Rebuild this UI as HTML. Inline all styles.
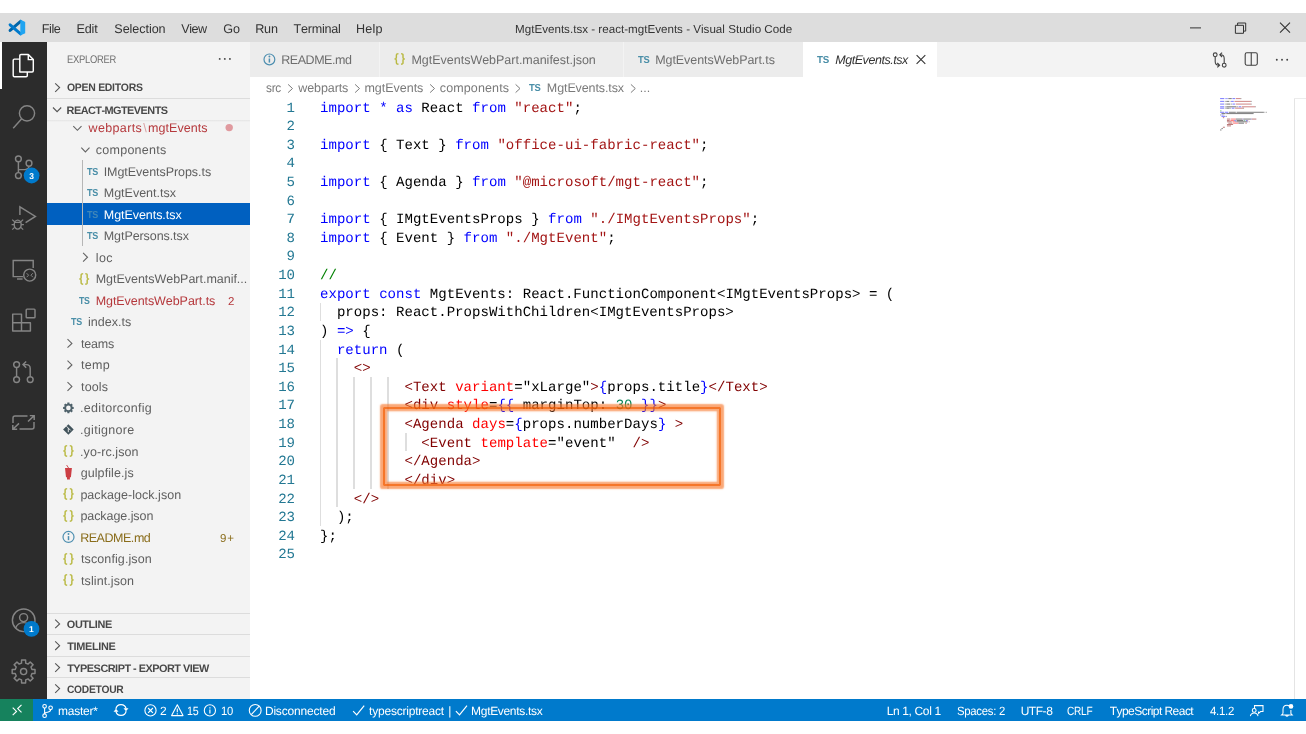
<!DOCTYPE html>
<html><head><meta charset="utf-8"><title>MgtEvents.tsx - react-mgtEvents - Visual Studio Code</title>
<style>
html,body{margin:0;padding:0;background:#fff;}
body{text-rendering:geometricPrecision;width:1306px;height:734px;position:relative;overflow:hidden;font-family:"Liberation Sans", sans-serif;}
.a{position:absolute;}
.t{position:absolute;white-space:pre;font-kerning:none;line-height:20px;height:20px;}
.c{position:absolute;white-space:pre;font-family:"Liberation Mono", monospace;font-size:14.05px;line-height:20px;height:20px;letter-spacing:0.016px;}
.ln{position:absolute;white-space:pre;font-family:"Liberation Mono", monospace;font-size:14.05px;line-height:20px;height:20px;color:#237893;text-align:right;width:40px;left:254.7px;letter-spacing:-0.25px;}
.g{position:absolute;width:1.5px;background:#dedede;}
svg{position:absolute;overflow:visible;}
</style></head><body>
<div class="a" style="left:-8px;top:0;width:1322px;height:734px;filter:blur(0.3px)"><div class="a" style="left:8px;top:0;width:1306px;height:734px">

<div class="a" style="left:-8px;top:13px;width:1322px;height:29px;background:#dddddd"></div>
<div class="a" style="left:-8px;top:42px;width:55px;height:657px;background:#2c2c2c"></div>
<div class="a" style="left:-8px;top:42px;width:10px;height:47.3px;background:#fff"></div>
<div class="a" style="left:47px;top:42px;width:203px;height:657px;background:#f3f3f3"></div>
<div class="a" style="left:250px;top:42px;width:1064px;height:34.8px;background:#f3f3f3"></div>
<div class="a" style="left:250px;top:42px;width:129px;height:34.8px;background:#ececec"></div>
<div class="a" style="left:380px;top:42px;width:243px;height:34.8px;background:#ececec"></div>
<div class="a" style="left:624px;top:42px;width:179px;height:34.8px;background:#ececec"></div>
<div class="a" style="left:803px;top:42px;width:134px;height:34.8px;background:#fff"></div>
<div class="a" style="left:-8px;top:698.8px;width:1322px;height:22px;background:#007acc"></div>
<div class="a" style="left:-8px;top:698.8px;width:41.4px;height:22px;background:#16825d"></div>
<div class="a" style="left:47px;top:98.0px;width:203px;height:1px;background:#dcdcdc"></div>
<div class="a" style="left:47px;top:612.5px;width:203px;height:1px;background:#dcdcdc"></div>
<div class="a" style="left:47px;top:634.3px;width:203px;height:1px;background:#dcdcdc"></div>
<div class="a" style="left:47px;top:655.8px;width:203px;height:1px;background:#dcdcdc"></div>
<div class="a" style="left:47px;top:676.9px;width:203px;height:1px;background:#dcdcdc"></div>
<div class="a" style="left:47px;top:119.5px;width:203px;height:2px;background:linear-gradient(#e4e4e4,#f3f3f3)"></div>
<div class="a" style="left:47px;top:203.3px;width:203px;height:21.5px;background:#0060c0"></div>
<div class="a" style="left:82.2px;top:160.3px;width:1.2px;height:85.7px;background:#b6b6b6"></div>
<div class="a" style="left:1293.7px;top:98px;width:1.3px;height:601px;background:#e4e4e4"></div>
<div class="a" style="left:1294px;top:97.5px;width:20px;height:1px;background:#ececec"></div>
<div class="g" style="left:319.5px;top:302.5px;height:18.6px"></div>
<div class="g" style="left:319.5px;top:339.8px;height:186.2px"></div>
<div class="g" style="left:336.4px;top:358.4px;height:149.0px"></div>
<div class="g" style="left:353.3px;top:377.0px;height:111.7px"></div>
<div class="g" style="left:370.2px;top:377.0px;height:111.7px"></div>
<div class="g" style="left:387.1px;top:377.0px;height:111.7px"></div>
<div class="g" style="left:405.0px;top:432.9px;height:18.6px"></div>
<span class="c" style="left:320.00px;top:99.00px;color:#0000ff">import</span>
<span class="c" style="left:379.13px;top:99.00px;color:#0000ff">*</span>
<span class="c" style="left:396.02px;top:99.00px;color:#0000ff">as</span>
<span class="c" style="left:421.36px;top:99.00px;color:#000">React</span>
<span class="c" style="left:472.05px;top:99.00px;color:#0000ff">from</span>
<span class="c" style="left:514.28px;top:99.00px;color:#a31515">&quot;react&quot;</span>
<span class="c" style="left:573.41px;top:99.00px;color:#000">;</span>
<span class="c" style="left:320.00px;top:136.00px;color:#0000ff">import</span>
<span class="c" style="left:379.13px;top:136.00px;color:#000">{ Text }</span>
<span class="c" style="left:455.15px;top:136.00px;color:#0000ff">from</span>
<span class="c" style="left:497.39px;top:136.00px;color:#a31515">&quot;office-ui-fabric-react&quot;</span>
<span class="c" style="left:700.12px;top:136.00px;color:#000">;</span>
<span class="c" style="left:320.00px;top:173.00px;color:#0000ff">import</span>
<span class="c" style="left:379.13px;top:173.00px;color:#000">{ Agenda }</span>
<span class="c" style="left:472.05px;top:173.00px;color:#0000ff">from</span>
<span class="c" style="left:514.28px;top:173.00px;color:#a31515">&quot;@microsoft/mgt-react&quot;</span>
<span class="c" style="left:700.12px;top:173.00px;color:#000">;</span>
<span class="c" style="left:320.00px;top:210.00px;color:#0000ff">import</span>
<span class="c" style="left:379.13px;top:210.00px;color:#000">{ IMgtEventsProps }</span>
<span class="c" style="left:548.07px;top:210.00px;color:#0000ff">from</span>
<span class="c" style="left:590.30px;top:210.00px;color:#a31515">&quot;./IMgtEventsProps&quot;</span>
<span class="c" style="left:750.80px;top:210.00px;color:#000">;</span>
<span class="c" style="left:320.00px;top:229.00px;color:#0000ff">import</span>
<span class="c" style="left:379.13px;top:229.00px;color:#000">{ Event }</span>
<span class="c" style="left:463.60px;top:229.00px;color:#0000ff">from</span>
<span class="c" style="left:505.83px;top:229.00px;color:#a31515">&quot;./MgtEvent&quot;</span>
<span class="c" style="left:607.20px;top:229.00px;color:#000">;</span>
<span class="c" style="left:320.00px;top:266.00px;color:#008000">//</span>
<span class="c" style="left:320.00px;top:285.00px;color:#0000ff">export</span>
<span class="c" style="left:379.13px;top:285.00px;color:#0000ff">const</span>
<span class="c" style="left:429.81px;top:285.00px;color:#000">MgtEvents: React.FunctionComponent&lt;IMgtEventsProps&gt; = (</span>
<span class="c" style="left:336.89px;top:303.00px;color:#000">props: React.PropsWithChildren&lt;IMgtEventsProps&gt;</span>
<span class="c" style="left:320.00px;top:322.00px;color:#000">)</span>
<span class="c" style="left:336.89px;top:322.00px;color:#0000ff">=&gt;</span>
<span class="c" style="left:362.24px;top:322.00px;color:#000">{</span>
<span class="c" style="left:336.89px;top:341.00px;color:#0000ff">return</span>
<span class="c" style="left:396.02px;top:341.00px;color:#000">(</span>
<span class="c" style="left:353.79px;top:359.00px;color:#800000">&lt;&gt;</span>
<span class="c" style="left:404.47px;top:378.00px;color:#800000">&lt;Text</span>
<span class="c" style="left:455.15px;top:378.00px;color:#ff0000">variant</span>
<span class="c" style="left:514.28px;top:378.00px;color:#000">=&quot;xLarge&quot;</span>
<span class="c" style="left:590.30px;top:378.00px;color:#800000">&gt;</span>
<span class="c" style="left:598.75px;top:378.00px;color:#0000ff">{</span>
<span class="c" style="left:607.20px;top:378.00px;color:#000">props.title</span>
<span class="c" style="left:700.12px;top:378.00px;color:#0000ff">}</span>
<span class="c" style="left:708.56px;top:378.00px;color:#800000">&lt;/Text&gt;</span>
<span class="c" style="left:404.47px;top:396.00px;color:#800000">&lt;div</span>
<span class="c" style="left:446.70px;top:396.00px;color:#ff0000">style</span>
<span class="c" style="left:488.94px;top:396.00px;color:#000">=</span>
<span class="c" style="left:497.39px;top:396.00px;color:#0000ff">{{</span>
<span class="c" style="left:522.73px;top:396.00px;color:#000">marginTop:</span>
<span class="c" style="left:615.64px;top:396.00px;color:#098658">30</span>
<span class="c" style="left:640.99px;top:396.00px;color:#0000ff">}}</span>
<span class="c" style="left:657.88px;top:396.00px;color:#800000">&gt;</span>
<span class="c" style="left:404.47px;top:415.00px;color:#800000">&lt;Agenda</span>
<span class="c" style="left:472.05px;top:415.00px;color:#ff0000">days</span>
<span class="c" style="left:505.83px;top:415.00px;color:#000">=</span>
<span class="c" style="left:514.28px;top:415.00px;color:#0000ff">{</span>
<span class="c" style="left:522.73px;top:415.00px;color:#000">props.numberDays</span>
<span class="c" style="left:657.88px;top:415.00px;color:#0000ff">}</span>
<span class="c" style="left:674.77px;top:415.00px;color:#800000">&gt;</span>
<span class="c" style="left:421.36px;top:434.00px;color:#800000">&lt;Event</span>
<span class="c" style="left:480.49px;top:434.00px;color:#ff0000">template</span>
<span class="c" style="left:548.07px;top:434.00px;color:#000">=&quot;event&quot;</span>
<span class="c" style="left:632.54px;top:434.00px;color:#800000">/&gt;</span>
<span class="c" style="left:404.47px;top:452.00px;color:#800000">&lt;/Agenda&gt;</span>
<span class="c" style="left:404.47px;top:471.00px;color:#800000">&lt;/div&gt;</span>
<span class="c" style="left:353.79px;top:490.00px;color:#800000">&lt;/&gt;</span>
<span class="c" style="left:336.89px;top:508.00px;color:#000">);</span>
<span class="c" style="left:320.00px;top:527.00px;color:#000">};</span>
<span class="ln" style="top:99.00px">1</span>
<span class="ln" style="top:117.00px">2</span>
<span class="ln" style="top:136.00px">3</span>
<span class="ln" style="top:154.00px">4</span>
<span class="ln" style="top:173.00px">5</span>
<span class="ln" style="top:192.00px">6</span>
<span class="ln" style="top:210.00px">7</span>
<span class="ln" style="top:229.00px">8</span>
<span class="ln" style="top:247.00px">9</span>
<span class="ln" style="top:266.00px">10</span>
<span class="ln" style="top:285.00px">11</span>
<span class="ln" style="top:303.00px">12</span>
<span class="ln" style="top:322.00px">13</span>
<span class="ln" style="top:341.00px">14</span>
<span class="ln" style="top:359.00px">15</span>
<span class="ln" style="top:378.00px">16</span>
<span class="ln" style="top:396.00px">17</span>
<span class="ln" style="top:415.00px">18</span>
<span class="ln" style="top:434.00px">19</span>
<span class="ln" style="top:452.00px">20</span>
<span class="ln" style="top:471.00px">21</span>
<span class="ln" style="top:490.00px">22</span>
<span class="ln" style="top:508.00px">23</span>
<span class="ln" style="top:527.00px">24</span>
<span class="ln" style="top:545.00px">25</span>
<div class="a" style="left:383.2px;top:406.7px;width:334.1px;height:75.5px;border:2px solid rgba(243,94,5,.85);box-shadow:0 0 1.5px 2.2px rgba(247,120,45,.65),inset 0 0 1.5px 2.2px rgba(247,120,45,.65);border-radius:1px"></div>
<svg class="a" style="left:0;top:0" width="1306" height="734" viewBox="0 0 1306 734" fill="none" ><path d="M55.20 83.30L59.60 87.60L55.20 91.90" stroke="#555" stroke-width="1.1"/><path d="M53.00 107.50L57.10 111.70L61.20 107.50" stroke="#555" stroke-width="1.1"/><path d="M55.20 619.60L59.60 623.90L55.20 628.20" stroke="#555" stroke-width="1.1"/><path d="M55.20 641.40L59.60 645.70L55.20 650.00" stroke="#555" stroke-width="1.1"/><path d="M55.20 663.30L59.60 667.60L55.20 671.90" stroke="#555" stroke-width="1.1"/><path d="M55.20 684.30L59.60 688.60L55.20 692.90" stroke="#555" stroke-width="1.1"/><path d="M73.30 126.10L77.40 130.30L81.50 126.10" stroke="#646464" stroke-width="1.1"/><path d="M81.30 147.64L85.40 151.84L89.50 147.64" stroke="#646464" stroke-width="1.1"/><path d="M83.10 252.94L87.50 257.24L83.10 261.54" stroke="#646464" stroke-width="1.1"/><path d="M67.50 339.10L71.90 343.40L67.50 347.70" stroke="#646464" stroke-width="1.1"/><path d="M67.50 360.64L71.90 364.94L67.50 369.24" stroke="#646464" stroke-width="1.1"/><path d="M67.50 382.18L71.90 386.48L67.50 390.78" stroke="#646464" stroke-width="1.1"/><path d="M288.10 84.40L292.50 88.50L288.10 92.60" stroke="#7a7a7a" stroke-width="1.0"/><path d="M355.10 84.40L359.50 88.50L355.10 92.60" stroke="#7a7a7a" stroke-width="1.0"/><path d="M430.10 84.40L434.50 88.50L430.10 92.60" stroke="#7a7a7a" stroke-width="1.0"/><path d="M515.60 84.40L520.00 88.50L515.60 92.60" stroke="#7a7a7a" stroke-width="1.0"/><path d="M630.90 84.40L635.30 88.50L630.90 92.60" stroke="#7a7a7a" stroke-width="1.0"/><path d="M20.6 21.4L10.1 30.4" stroke="#0065a9" stroke-width="3" stroke-linecap="round"/><path d="M20.6 33.8L10.1 24.8" stroke="#007acc" stroke-width="3" stroke-linecap="round"/><path d="M20.3 19.6L25.2 21.9V33.3L20.3 35.6Z" fill="#1fa4f1"/><path d="M1190 27.9H1201" stroke="#333" stroke-width="1"/><path d="M1235.4 25.3H1243.5V33.3H1235.4Z" stroke="#333" stroke-width="1"/><path d="M1237.6 25.3V23H1245.7V31.1H1243.5" stroke="#333" stroke-width="1"/><path d="M1280 22.7L1290 32.7M1290 22.7L1280 32.7" stroke="#333" stroke-width="1.1"/><circle cx="269.4" cy="59.4" r="5.4" stroke="#4e8fb0" stroke-width="1.2"/><path d="M269.40 58.50V62.60" stroke="#4e8fb0" stroke-width="1.5"/><circle cx="269.4" cy="56.50" r="0.95" fill="#4e8fb0"/><circle cx="68.5" cy="536.96" r="5.5" stroke="#4e8fb0" stroke-width="1.2"/><path d="M68.50 536.06V540.16" stroke="#4e8fb0" stroke-width="1.5"/><circle cx="68.5" cy="534.06" r="0.95" fill="#4e8fb0"/><path d="M916.6 55.2L925.3 63.9M925.3 55.2L916.6 63.9" stroke="#333" stroke-width="1.1"/><circle cx="1215.2" cy="54.8" r="1.9" stroke="#424242" stroke-width="1.1"/><circle cx="1224.2" cy="65.2" r="1.9" stroke="#424242" stroke-width="1.1"/><path d="M1215.2 56.8V61.5Q1215.2 65.2 1218.8 65.2M1217.3 63L1219.6 65.2L1217.3 67.4" stroke="#424242" stroke-width="1.1"/><path d="M1224.2 63.2V58.5Q1224.2 54.8 1220.6 54.8M1222.1 52.6L1219.8 54.8L1222.1 57" stroke="#424242" stroke-width="1.1"/><rect x="1245.2" y="52.8" width="12.1" height="12.4" rx="1.6" stroke="#424242" stroke-width="1.1"/><path d="M1251.25 52.8V65.2" stroke="#424242" stroke-width="1.1"/><circle cx="1276.8" cy="59.7" r="0.95" fill="#424242"/><circle cx="1282" cy="59.7" r="0.95" fill="#424242"/><circle cx="1287.2" cy="59.7" r="0.95" fill="#424242"/><circle cx="219.7" cy="58.9" r="0.95" fill="#424242"/><circle cx="224.8" cy="58.9" r="0.95" fill="#424242"/><circle cx="229.9" cy="58.9" r="0.95" fill="#424242"/><circle cx="229.2" cy="127.6" r="3.7" fill="#e09a9f"/><path d="M67.28 403.87L67.36 402.62L69.44 402.62L69.52 403.87L70.47 404.27L71.41 403.44L72.88 404.91L72.05 405.85L72.45 406.80L73.70 406.88L73.70 408.96L72.45 409.04L72.05 409.99L72.88 410.93L71.41 412.40L70.47 411.57L69.52 411.97L69.44 413.22L67.36 413.22L67.28 411.97L66.33 411.57L65.39 412.40L63.92 410.93L64.75 409.99L64.35 409.04L63.10 408.96L63.10 406.88L64.35 406.80L64.75 405.85L63.92 404.91L65.39 403.44L66.33 404.27ZM66.10 407.92a2.30 2.30 0 1 0 4.60 0a2.30 2.30 0 1 0 -4.60 0Z" fill="#4f626b" fill-rule="evenodd"/><path d="M68.4 424.26L73.7 429.56L68.4 434.86L63.1 429.56Z" fill="#41535b"/><path d="M66.4 426.16L70.6 430.36M68.3 428.16V432.16" stroke="#f3f3f3" stroke-width="0.9"/><path d="M65 468.04H71.9L70.9 477.24H69.9V479.44H67V477.24H66Z" fill="#cc3e44"/><path d="M68.6 468.04L66.6 465.04" stroke="#cc3e44" stroke-width="0.9"/><path d="M19.8 71.9V55.6Q19.8 54.4 21 54.4H28.3L33.3 59.6V70.7Q33.3 71.9 32.1 71.9Z" stroke="#fff" stroke-width="1.45" stroke-linejoin="round"/><path d="M28.3 54.4V59.6H33.3" stroke="#fff" stroke-width="1.45"/><path d="M19.8 59.1H14.4Q13.2 59.1 13.2 60.3V75.6Q13.2 76.8 14.4 76.8H26.1Q27.3 76.8 27.3 75.6V71.9" stroke="#fff" stroke-width="1.45"/><circle cx="27" cy="113.3" r="7.6" stroke="#858585" stroke-width="1.45"/><path d="M21.7 118.8L13.2 128.2" stroke="#858585" stroke-width="1.45"/><circle cx="18.4" cy="158.8" r="2.9" stroke="#858585" stroke-width="1.45"/><circle cx="29" cy="163.2" r="2.9" stroke="#858585" stroke-width="1.45"/><circle cx="18.4" cy="175.5" r="2.9" stroke="#858585" stroke-width="1.45"/><path d="M18.4 161.7V172.6M29 166.1Q29 169.6 25 169.6H18.4" stroke="#858585" stroke-width="1.45"/><circle cx="31.6" cy="175.5" r="7.9" fill="#007acc"/><path d="M19.9 215V206.8L35.4 216.4L25.6 222.6" stroke="#858585" stroke-width="1.45" stroke-linejoin="miter"/><ellipse cx="17.7" cy="224.6" rx="3.5" ry="4.5" stroke="#858585" stroke-width="1.45"/><path d="M14.2 224.6H11.6M21.2 224.6H23.9M14.6 221.8L12.2 219.6M20.8 221.8L23.2 219.6M14.6 227.4L12.2 229.6M20.8 227.4L23.2 229.6M14.6 222.4H20.8" stroke="#858585" stroke-width="1.2"/><path d="M23 276.6H13.2V260.4H33.2V268" stroke="#858585" stroke-width="1.45"/><path d="M17 279H22.6" stroke="#858585" stroke-width="1.45"/><circle cx="29.7" cy="275.1" r="6" stroke="#858585" stroke-width="1.45"/><path d="M26.6 273.2L28.6 275.2L26.6 277.2M32.9 273.2L30.9 275.2L32.9 277.2" stroke="#858585" stroke-width="1"/><path d="M12.7 314.1H21.5V322.7H30.4V330.9H12.7ZM12.7 322.7H21.5V330.9" stroke="#858585" stroke-width="1.45" stroke-linejoin="round"/><rect x="26.2" y="309.1" width="8.8" height="8.6" rx="0.8" stroke="#858585" stroke-width="1.45"/><circle cx="16.6" cy="364.6" r="2.9" stroke="#858585" stroke-width="1.45"/><circle cx="16.6" cy="379.6" r="2.9" stroke="#858585" stroke-width="1.45"/><circle cx="30.2" cy="379.6" r="2.9" stroke="#858585" stroke-width="1.45"/><path d="M16.6 367.5V376.7M30.2 376.7V368.5Q30.2 364.6 26.3 364.6H23.4M26.2 361.4L23 364.6L26.2 367.8" stroke="#858585" stroke-width="1.45"/><path d="M27.5 415.9H15Q13 415.9 13 417.9V423M19.5 429H32Q34 429 34 427V421.9" stroke="#858585" stroke-width="1.45"/><path d="M28 421.5L34.2 415.6M29.8 415.6H34.2V420M19 423.4L12.8 429.3M17.2 429.3H12.8V424.9" stroke="#858585" stroke-width="1.45"/><circle cx="23.7" cy="620.3" r="11.3" stroke="#858585" stroke-width="1.45"/><circle cx="23.6" cy="617.6" r="4" stroke="#858585" stroke-width="1.45"/><path d="M15.6 628.2Q17.5 622.6 23.6 622.6Q29.7 622.6 31.6 628.2" stroke="#858585" stroke-width="1.45"/><circle cx="31.5" cy="628.9" r="7.9" fill="#007acc"/><path d="M21.51 663.16L21.56 660.08L25.64 660.08L25.69 663.16L28.02 664.12L30.23 661.98L33.12 664.87L30.98 667.08L31.94 669.41L35.02 669.46L35.02 673.54L31.94 673.59L30.98 675.92L33.12 678.13L30.23 681.02L28.02 678.88L25.69 679.84L25.64 682.92L21.56 682.92L21.51 679.84L19.18 678.88L16.97 681.02L14.08 678.13L16.22 675.92L15.26 673.59L12.18 673.54L12.18 669.46L15.26 669.41L16.22 667.08L14.08 664.87L16.97 661.98L19.18 664.12Z" stroke="#858585" stroke-width="1.45" stroke-linejoin="round"/><circle cx="23.6" cy="671.5" r="3.1" stroke="#858585" stroke-width="1.45"/><path d="M12.7 707.6L16.5 711.4L12.7 715.2M21.5 704.8L17.7 708.6L21.5 712.4" stroke="#fff" stroke-width="1.15"/><circle cx="44.6" cy="706.3" r="1.8" stroke="#fff" stroke-width="1.1"/><circle cx="44.6" cy="715.7" r="1.8" stroke="#fff" stroke-width="1.1"/><circle cx="50.6" cy="707.8" r="1.8" stroke="#fff" stroke-width="1.1"/><path d="M44.6 708.1V713.9M50.6 709.6Q50.6 712 47.5 712.2Q44.6 712.4 44.6 713.9" stroke="#fff" stroke-width="1.1"/><path d="M115.9 708.9A5.2 5.2 0 0 1 126.1 708.6M126.1 711.1A5.2 5.2 0 0 1 115.9 711.4" stroke="#fff" stroke-width="1.2"/><path d="M123.5 708.2H128.5L126 711.3ZM113.5 711.8H118.5L116 708.7Z" fill="#fff"/><circle cx="150.5" cy="710.4" r="5.6" stroke="#fff" stroke-width="1.1"/><path d="M148.1 708L152.9 712.8M152.9 708L148.1 712.8" stroke="#fff" stroke-width="1.1"/><path d="M177.3 704.8L183 715.6H171.6Z" stroke="#fff" stroke-width="1.1" stroke-linejoin="round"/><path d="M177.3 708.6V712.2M177.3 713.2V714.4" stroke="#fff" stroke-width="1.1"/><circle cx="209.9" cy="710.4" r="5.6" stroke="#fff" stroke-width="1.1"/><path d="M209.9 709.6V713.4M209.9 707.2V708.5" stroke="#fff" stroke-width="1.2"/><circle cx="255.2" cy="710.4" r="5.9" stroke="#fff" stroke-width="1.1"/><path d="M251.2 714.6L259.2 706.2" stroke="#fff" stroke-width="1.1"/><path d="M353.1 711.2L356.7 714.8L364.2 705.6" stroke="#fff" stroke-width="1.2"/><path d="M455.9 711.2L459.5 714.8L467.0 705.6" stroke="#fff" stroke-width="1.2"/><path d="M1254.5 711.5V705.6H1263V711.5H1260.6L1258.6 713.4V711.5" stroke="#fff" stroke-width="1.05"/><circle cx="1254.2" cy="710.4" r="1.9" stroke="#fff" stroke-width="1.05" fill="#007acc"/><path d="M1250.4 716.2Q1250.9 712.9 1254.2 712.9Q1257.5 712.9 1258 716.2" stroke="#fff" stroke-width="1.05" fill="#007acc"/><path d="M1283 713.6V709.4Q1283 705.2 1287 705.2Q1288.2 705.2 1289 705.7M1290.9 710V713.6L1292.2 714.9H1281.6L1283 713.6M1285.6 715.4Q1287 717 1288.4 715.4" stroke="#fff" stroke-width="1.05"/><circle cx="1291" cy="706.4" r="2.3" fill="#fff"/></svg>
<svg class="a" style="left:0;top:0;opacity:.55" width="1306" height="734" viewBox="0 0 1306 734"><rect x="1220.10" y="98.15" width="4.10" height="0.95" fill="#0000ff"/><rect x="1224.89" y="98.15" width="0.68" height="0.95" fill="#0000ff"/><rect x="1226.26" y="98.15" width="1.37" height="0.95" fill="#0000ff"/><rect x="1228.31" y="98.15" width="3.42" height="0.95" fill="#000"/><rect x="1232.41" y="98.15" width="2.74" height="0.95" fill="#0000ff"/><rect x="1235.83" y="98.15" width="4.79" height="0.95" fill="#a31515"/><rect x="1240.62" y="98.15" width="0.68" height="0.95" fill="#000"/><rect x="1220.10" y="100.88" width="4.10" height="0.95" fill="#0000ff"/><rect x="1224.89" y="100.88" width="0.68" height="0.95" fill="#000"/><rect x="1226.26" y="100.88" width="2.74" height="0.95" fill="#000"/><rect x="1229.68" y="100.88" width="0.68" height="0.95" fill="#000"/><rect x="1231.04" y="100.88" width="2.74" height="0.95" fill="#0000ff"/><rect x="1234.46" y="100.88" width="16.42" height="0.95" fill="#a31515"/><rect x="1250.88" y="100.88" width="0.68" height="0.95" fill="#000"/><rect x="1220.10" y="103.60" width="4.10" height="0.95" fill="#0000ff"/><rect x="1224.89" y="103.60" width="0.68" height="0.95" fill="#000"/><rect x="1226.26" y="103.60" width="4.10" height="0.95" fill="#000"/><rect x="1231.04" y="103.60" width="0.68" height="0.95" fill="#000"/><rect x="1232.41" y="103.60" width="2.74" height="0.95" fill="#0000ff"/><rect x="1235.83" y="103.60" width="15.05" height="0.95" fill="#a31515"/><rect x="1250.88" y="103.60" width="0.68" height="0.95" fill="#000"/><rect x="1220.10" y="106.33" width="4.10" height="0.95" fill="#0000ff"/><rect x="1224.89" y="106.33" width="0.68" height="0.95" fill="#000"/><rect x="1226.26" y="106.33" width="10.26" height="0.95" fill="#000"/><rect x="1237.20" y="106.33" width="0.68" height="0.95" fill="#000"/><rect x="1238.57" y="106.33" width="2.74" height="0.95" fill="#0000ff"/><rect x="1241.99" y="106.33" width="13.00" height="0.95" fill="#a31515"/><rect x="1254.98" y="106.33" width="0.68" height="0.95" fill="#000"/><rect x="1220.10" y="107.69" width="4.10" height="0.95" fill="#0000ff"/><rect x="1224.89" y="107.69" width="0.68" height="0.95" fill="#000"/><rect x="1226.26" y="107.69" width="3.42" height="0.95" fill="#000"/><rect x="1230.36" y="107.69" width="0.68" height="0.95" fill="#000"/><rect x="1231.73" y="107.69" width="2.74" height="0.95" fill="#0000ff"/><rect x="1235.15" y="107.69" width="8.21" height="0.95" fill="#a31515"/><rect x="1243.36" y="107.69" width="0.68" height="0.95" fill="#000"/><rect x="1220.10" y="110.42" width="1.37" height="0.95" fill="#008000"/><rect x="1220.10" y="111.78" width="4.10" height="0.95" fill="#0000ff"/><rect x="1224.89" y="111.78" width="3.42" height="0.95" fill="#0000ff"/><rect x="1228.99" y="111.78" width="6.84" height="0.95" fill="#000"/><rect x="1236.52" y="111.78" width="27.36" height="0.95" fill="#000"/><rect x="1264.56" y="111.78" width="0.68" height="0.95" fill="#000"/><rect x="1265.93" y="111.78" width="0.68" height="0.95" fill="#000"/><rect x="1221.47" y="113.14" width="4.10" height="0.95" fill="#000"/><rect x="1226.26" y="113.14" width="27.36" height="0.95" fill="#000"/><rect x="1220.10" y="114.51" width="0.68" height="0.95" fill="#000"/><rect x="1221.47" y="114.51" width="1.37" height="0.95" fill="#0000ff"/><rect x="1223.52" y="114.51" width="0.68" height="0.95" fill="#000"/><rect x="1221.47" y="115.87" width="4.10" height="0.95" fill="#0000ff"/><rect x="1226.26" y="115.87" width="0.68" height="0.95" fill="#000"/><rect x="1222.84" y="117.23" width="1.37" height="0.95" fill="#800000"/><rect x="1226.94" y="118.59" width="3.42" height="0.95" fill="#800000"/><rect x="1231.04" y="118.59" width="4.79" height="0.95" fill="#ff0000"/><rect x="1235.83" y="118.59" width="6.16" height="0.95" fill="#000"/><rect x="1241.99" y="118.59" width="0.68" height="0.95" fill="#800000"/><rect x="1242.67" y="118.59" width="0.68" height="0.95" fill="#0000ff"/><rect x="1243.36" y="118.59" width="7.52" height="0.95" fill="#000"/><rect x="1250.88" y="118.59" width="0.68" height="0.95" fill="#0000ff"/><rect x="1251.56" y="118.59" width="4.79" height="0.95" fill="#800000"/><rect x="1226.94" y="119.96" width="2.74" height="0.95" fill="#800000"/><rect x="1230.36" y="119.96" width="3.42" height="0.95" fill="#ff0000"/><rect x="1233.78" y="119.96" width="0.68" height="0.95" fill="#000"/><rect x="1234.46" y="119.96" width="1.37" height="0.95" fill="#0000ff"/><rect x="1236.52" y="119.96" width="6.84" height="0.95" fill="#000"/><rect x="1244.04" y="119.96" width="1.37" height="0.95" fill="#098658"/><rect x="1246.09" y="119.96" width="1.37" height="0.95" fill="#0000ff"/><rect x="1247.46" y="119.96" width="0.68" height="0.95" fill="#800000"/><rect x="1226.94" y="121.32" width="4.79" height="0.95" fill="#800000"/><rect x="1232.41" y="121.32" width="2.74" height="0.95" fill="#ff0000"/><rect x="1235.15" y="121.32" width="0.68" height="0.95" fill="#000"/><rect x="1235.83" y="121.32" width="0.68" height="0.95" fill="#0000ff"/><rect x="1236.52" y="121.32" width="10.94" height="0.95" fill="#000"/><rect x="1247.46" y="121.32" width="0.68" height="0.95" fill="#0000ff"/><rect x="1248.83" y="121.32" width="0.68" height="0.95" fill="#800000"/><rect x="1228.31" y="122.68" width="4.10" height="0.95" fill="#800000"/><rect x="1233.10" y="122.68" width="5.47" height="0.95" fill="#ff0000"/><rect x="1238.57" y="122.68" width="5.47" height="0.95" fill="#000"/><rect x="1245.41" y="122.68" width="1.37" height="0.95" fill="#800000"/><rect x="1226.94" y="124.05" width="6.16" height="0.95" fill="#800000"/><rect x="1226.94" y="125.41" width="4.10" height="0.95" fill="#800000"/><rect x="1222.84" y="126.77" width="2.05" height="0.95" fill="#800000"/><rect x="1221.47" y="128.14" width="1.37" height="0.95" fill="#000"/><rect x="1220.10" y="129.50" width="1.37" height="0.95" fill="#000"/></svg>
<span class="t" style="left:41.77px;top:19.00px;font-size:12.6px;color:#333;letter-spacing:-0.403px;">File</span>
<span class="t" style="left:76.57px;top:19.00px;font-size:12.6px;color:#333;letter-spacing:-0.195px;">Edit</span>
<span class="t" style="left:114.33px;top:19.00px;font-size:12.6px;color:#333;letter-spacing:-0.068px;">Selection</span>
<span class="t" style="left:181.34px;top:19.00px;font-size:12.6px;color:#333;letter-spacing:-0.495px;">View</span>
<span class="t" style="left:223.27px;top:19.00px;font-size:12.6px;color:#333;letter-spacing:-0.045px;">Go</span>
<span class="t" style="left:255.17px;top:19.00px;font-size:12.6px;color:#333;letter-spacing:-0.131px;">Run</span>
<span class="t" style="left:293.52px;top:19.00px;font-size:12.6px;color:#333;letter-spacing:-0.255px;">Terminal</span>
<span class="t" style="left:355.97px;top:19.00px;font-size:12.6px;color:#333;letter-spacing:0.216px;">Help</span>
<span class="t" style="left:515.05px;top:20.00px;font-size:11.6px;color:#333;letter-spacing:0.012px;">MgtEvents.tsx - react-mgtEvents - Visual Studio Code</span>
<span class="t" style="left:281.27px;top:50.00px;font-size:12.5px;color:#6e6e6e;letter-spacing:-0.461px;">README.md</span>
<span class="t" style="left:411.47px;top:50.00px;font-size:12.5px;color:#6e6e6e;letter-spacing:-0.016px;">MgtEventsWebPart.manifest.json</span>
<span class="t" style="left:655.17px;top:50.00px;font-size:12.5px;color:#6e6e6e;letter-spacing:-0.061px;">MgtEventsWebPart.ts</span>
<span class="t" style="left:835.22px;top:50.00px;font-size:12.5px;color:#333;letter-spacing:-0.448px;font-style:italic;">MgtEvents.tsx</span>
<span class="t" style="left:265.97px;top:78.00px;font-size:12.5px;color:#7a7a7a;letter-spacing:-0.300px;transform-origin:0 0;transform:scaleX(0.9490);">src</span>
<span class="t" style="left:298.32px;top:78.00px;font-size:12.5px;color:#7a7a7a;letter-spacing:-0.098px;">webparts</span>
<span class="t" style="left:364.47px;top:78.00px;font-size:12.5px;color:#7a7a7a;letter-spacing:-0.021px;">mgtEvents</span>
<span class="t" style="left:439.77px;top:78.00px;font-size:12.5px;color:#7a7a7a;letter-spacing:0.132px;">components</span>
<span class="t" style="left:546.87px;top:78.00px;font-size:12.5px;color:#7a7a7a;letter-spacing:-0.103px;">MgtEvents.tsx</span>
<span class="t" style="left:639.76px;top:78.00px;font-size:12.5px;color:#7a7a7a;letter-spacing:0.082px;">...</span>
<span class="t" style="left:66.53px;top:50.00px;font-size:11.1px;color:#6f6f6f;letter-spacing:-0.300px;transform-origin:0 0;transform:scaleX(0.8467);">EXPLORER</span>
<span class="t" style="left:66.87px;top:78.00px;font-size:10.9px;color:#484848;letter-spacing:-0.300px;font-weight:bold;transform-origin:0 0;transform:scaleX(0.9617);">OPEN EDITORS</span>
<span class="t" style="left:66.57px;top:101.00px;font-size:10.9px;color:#484848;letter-spacing:-0.532px;font-weight:bold;">REACT-MGTEVENTS</span>
<span class="t" style="left:66.85px;top:615.00px;font-size:10.9px;color:#484848;letter-spacing:-0.411px;font-weight:bold;">OUTLINE</span>
<span class="t" style="left:67.18px;top:637.00px;font-size:10.9px;color:#484848;letter-spacing:-0.302px;font-weight:bold;">TIMELINE</span>
<span class="t" style="left:67.18px;top:659.00px;font-size:10.9px;color:#484848;letter-spacing:-0.500px;font-weight:bold;">TYPESCRIPT - EXPORT VIEW</span>
<span class="t" style="left:66.88px;top:680.00px;font-size:10.9px;color:#484848;letter-spacing:-0.300px;font-weight:bold;transform-origin:0 0;transform:scaleX(0.9413);">CODETOUR</span>
<span class="t" style="left:88.62px;top:118.00px;font-size:12.5px;color:#b5383c;letter-spacing:0.345px;">webparts</span>
<span class="t" style="left:143.36px;top:118.00px;font-size:12.5px;color:#d9a0a2;letter-spacing:0.000px;">\</span>
<span class="t" style="left:148.07px;top:118.00px;font-size:12.5px;color:#b5383c;letter-spacing:0.041px;">mgtEvents</span>
<span class="t" style="left:95.87px;top:140.00px;font-size:12.5px;color:#5f5f5f;letter-spacing:0.243px;">components</span>
<span class="t" style="left:103.65px;top:162.00px;font-size:12.5px;color:#5f5f5f;letter-spacing:-0.051px;">IMgtEventsProps.ts</span>
<span class="t" style="left:103.77px;top:183.00px;font-size:12.5px;color:#5f5f5f;letter-spacing:-0.008px;">MgtEvent.tsx</span>
<span class="t" style="left:103.77px;top:205.00px;font-size:12.5px;color:#fff;letter-spacing:-0.053px;">MgtEvents.tsx</span>
<span class="t" style="left:103.77px;top:226.00px;font-size:12.5px;color:#5f5f5f;letter-spacing:-0.075px;">MgtPersons.tsx</span>
<span class="t" style="left:95.86px;top:248.00px;font-size:12.5px;color:#5f5f5f;letter-spacing:0.296px;">loc</span>
<span class="t" style="left:95.67px;top:269.00px;font-size:12.5px;color:#5f5f5f;letter-spacing:-0.024px;">MgtEventsWebPart.manif...</span>
<span class="t" style="left:95.67px;top:291.00px;font-size:12.5px;color:#b5383c;letter-spacing:-0.066px;">MgtEventsWebPart.ts</span>
<span class="t" style="left:228.00px;top:292.00px;font-size:11.5px;color:#b5383c;letter-spacing:0.000px;">2</span>
<span class="t" style="left:87.96px;top:312.00px;font-size:12.5px;color:#5f5f5f;letter-spacing:0.016px;">index.ts</span>
<span class="t" style="left:81.01px;top:334.00px;font-size:12.5px;color:#5f5f5f;letter-spacing:-0.200px;">teams</span>
<span class="t" style="left:81.01px;top:355.00px;font-size:12.5px;color:#5f5f5f;letter-spacing:0.342px;">temp</span>
<span class="t" style="left:81.01px;top:377.00px;font-size:12.5px;color:#5f5f5f;letter-spacing:0.159px;">tools</span>
<span class="t" style="left:80.06px;top:398.00px;font-size:12.5px;color:#5f5f5f;letter-spacing:0.296px;">.editorconfig</span>
<span class="t" style="left:80.06px;top:420.00px;font-size:12.5px;color:#5f5f5f;letter-spacing:0.308px;">.gitignore</span>
<span class="t" style="left:80.06px;top:442.00px;font-size:12.5px;color:#5f5f5f;letter-spacing:0.080px;">.yo-rc.json</span>
<span class="t" style="left:80.68px;top:463.00px;font-size:12.5px;color:#5f5f5f;letter-spacing:0.086px;">gulpfile.js</span>
<span class="t" style="left:80.39px;top:485.00px;font-size:12.5px;color:#5f5f5f;letter-spacing:0.048px;">package-lock.json</span>
<span class="t" style="left:80.39px;top:506.00px;font-size:12.5px;color:#5f5f5f;letter-spacing:-0.059px;">package.json</span>
<span class="t" style="left:80.17px;top:528.00px;font-size:12.5px;color:#8a6d1b;letter-spacing:-0.461px;">README.md</span>
<span class="t" style="left:220.06px;top:529.00px;font-size:11.5px;color:#8a6d1b;letter-spacing:0.795px;">9+</span>
<span class="t" style="left:81.01px;top:549.00px;font-size:12.5px;color:#5f5f5f;letter-spacing:0.102px;">tsconfig.json</span>
<span class="t" style="left:81.01px;top:571.00px;font-size:12.5px;color:#5f5f5f;letter-spacing:0.090px;">tslint.json</span>
<span class="t" style="left:86.90px;top:163.00px;font-size:10.2px;color:#4b8fa8;letter-spacing:-0.300px;font-weight:bold;transform-origin:0 0;transform:scaleX(0.8837);">TS</span>
<span class="t" style="left:86.90px;top:184.00px;font-size:10.2px;color:#4b8fa8;letter-spacing:-0.300px;font-weight:bold;transform-origin:0 0;transform:scaleX(0.8837);">TS</span>
<span class="t" style="left:86.90px;top:206.00px;font-size:10.2px;color:#3f86b8;letter-spacing:-0.300px;font-weight:bold;transform-origin:0 0;transform:scaleX(0.8837);">TS</span>
<span class="t" style="left:86.90px;top:227.00px;font-size:10.2px;color:#4b8fa8;letter-spacing:-0.300px;font-weight:bold;transform-origin:0 0;transform:scaleX(0.8837);">TS</span>
<span class="t" style="left:79.30px;top:292.00px;font-size:10.2px;color:#4b8fa8;letter-spacing:-0.300px;font-weight:bold;transform-origin:0 0;transform:scaleX(0.8592);">TS</span>
<span class="t" style="left:71.00px;top:313.00px;font-size:10.2px;color:#4b8fa8;letter-spacing:-0.300px;font-weight:bold;transform-origin:0 0;transform:scaleX(0.8755);">TS</span>
<span class="t" style="left:637.90px;top:51.00px;font-size:10.2px;color:#4b8fa8;letter-spacing:-0.300px;font-weight:bold;transform-origin:0 0;transform:scaleX(0.9165);">TS</span>
<span class="t" style="left:817.09px;top:51.00px;font-size:10.2px;color:#4b8fa8;letter-spacing:-0.300px;font-weight:bold;transform-origin:0 0;transform:scaleX(0.9574);">TS</span>
<span class="t" style="left:529.19px;top:79.00px;font-size:10.2px;color:#4b8fa8;letter-spacing:-0.300px;font-weight:bold;transform-origin:0 0;transform:scaleX(0.9246);">TS</span>
<span class="t" style="left:79.20px;top:268.00px;font-size:11.8px;color:#b7b73b;letter-spacing:2.027px;-webkit-text-stroke:0.35px #b7b73b;">{}</span>
<span class="t" style="left:63.20px;top:440.00px;font-size:11.8px;color:#b7b73b;letter-spacing:2.527px;-webkit-text-stroke:0.35px #b7b73b;">{}</span>
<span class="t" style="left:63.20px;top:483.00px;font-size:11.8px;color:#b7b73b;letter-spacing:2.527px;-webkit-text-stroke:0.35px #b7b73b;">{}</span>
<span class="t" style="left:63.20px;top:505.00px;font-size:11.8px;color:#b7b73b;letter-spacing:2.527px;-webkit-text-stroke:0.35px #b7b73b;">{}</span>
<span class="t" style="left:63.20px;top:548.00px;font-size:11.8px;color:#b7b73b;letter-spacing:2.527px;-webkit-text-stroke:0.35px #b7b73b;">{}</span>
<span class="t" style="left:63.20px;top:569.00px;font-size:11.8px;color:#b7b73b;letter-spacing:2.527px;-webkit-text-stroke:0.35px #b7b73b;">{}</span>
<span class="t" style="left:394.60px;top:48.00px;font-size:11.8px;color:#b7b73b;letter-spacing:2.427px;-webkit-text-stroke:0.35px #b7b73b;">{}</span>
<span class="t" style="left:58.00px;top:701.00px;font-size:12px;color:#fff;letter-spacing:-0.227px;">master*</span>
<span class="t" style="left:160.06px;top:701.00px;font-size:12px;color:#fff;letter-spacing:0.000px;">2</span>
<span class="t" style="left:187.38px;top:701.00px;font-size:12px;color:#fff;letter-spacing:-0.300px;transform-origin:0 0;transform:scaleX(0.8943);">15</span>
<span class="t" style="left:220.55px;top:701.00px;font-size:12px;color:#fff;letter-spacing:-0.300px;transform-origin:0 0;transform:scaleX(0.9344);">10</span>
<span class="t" style="left:264.92px;top:701.00px;font-size:12px;color:#fff;letter-spacing:-0.186px;">Disconnected</span>
<span class="t" style="left:369.02px;top:701.00px;font-size:12px;color:#fff;letter-spacing:-0.204px;">typescriptreact</span>
<span class="t" style="left:448.14px;top:701.00px;font-size:12px;color:#fff;letter-spacing:0.000px;">|</span>
<span class="t" style="left:471.12px;top:701.00px;font-size:12px;color:#fff;letter-spacing:-0.320px;">MgtEvents.tsx</span>
<span class="t" style="left:886.72px;top:701.00px;font-size:12px;color:#fff;letter-spacing:-0.367px;">Ln 1, Col 1</span>
<span class="t" style="left:957.28px;top:701.00px;font-size:12px;color:#fff;letter-spacing:-0.300px;transform-origin:0 0;transform:scaleX(0.9454);">Spaces: 2</span>
<span class="t" style="left:1020.67px;top:701.00px;font-size:12px;color:#fff;letter-spacing:-0.462px;">UTF-8</span>
<span class="t" style="left:1067.49px;top:701.00px;font-size:12px;color:#fff;letter-spacing:-0.300px;transform-origin:0 0;transform:scaleX(0.8417);">CRLF</span>
<span class="t" style="left:1109.73px;top:701.00px;font-size:12px;color:#fff;letter-spacing:-0.538px;">TypeScript React</span>
<span class="t" style="left:1209.94px;top:701.00px;font-size:12px;color:#fff;letter-spacing:-0.300px;transform-origin:0 0;transform:scaleX(0.9508);">4.1.2</span>
<span class="t" style="left:29.29px;top:166.00px;font-size:8.5px;color:#fff;letter-spacing:0.000px;font-weight:bold;">3</span>
<span class="t" style="left:28.99px;top:619.00px;font-size:8.5px;color:#fff;letter-spacing:0.000px;font-weight:bold;">1</span>
</div></div>
</body></html>
